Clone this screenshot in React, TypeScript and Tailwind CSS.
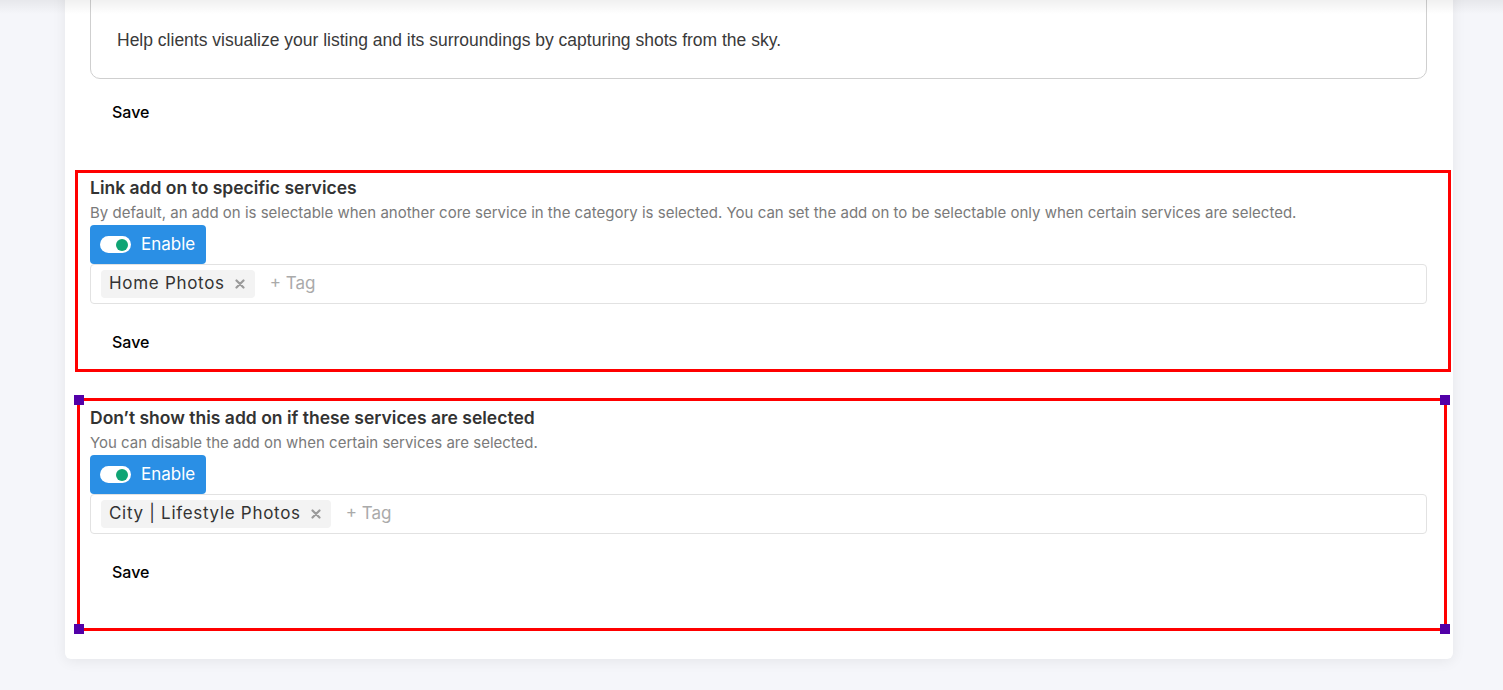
import React from 'react';

const font = { fontFamily: 'Inter, "Noto Sans", sans-serif' };

const Toggle = () => (
  <button className="flex items-center gap-[10px] h-[39px] w-[116px] px-[10px] rounded-[4px] bg-[#2a8fe5] text-white text-[17px]">
    <span className="flex items-center justify-end w-[31px] h-[17px] px-[3px] rounded-full bg-white">
      <span className="w-[12px] h-[12px] rounded-full bg-[#10a474]" />
    </span>
    <span>Enable</span>
  </button>
);

const TagInput = ({ tag }: { tag: string }) => (
  <div className="flex items-center h-[40px] border border-[#e2e2e2] rounded-[4px] px-[10px] gap-[15px]">
    <span className="flex items-center h-[28px] pl-[8px] pr-[10px] gap-[10px] rounded-[4px] bg-[#f3f3f3] text-[17px] text-[#333]">
      <span className="tracking-[0.7px]">{tag}</span>
      <svg viewBox="0 0 10 10" className="w-[10px] h-[10px]" stroke="#9a9a9a" strokeWidth="2.2" strokeLinecap="round">
        <path d="M1.5 1.5l7 7M8.5 1.5l-7 7" />
      </svg>
    </span>
    <span className="text-[17px] text-[#aaa]">+ Tag</span>
  </div>
);

const SaveButton = () => (
  <button className="h-[40px] px-[22px] flex items-center text-[16px] font-medium text-black">Save</button>
);

interface SectionProps {
  title: string;
  description: string;
  tag: string;
}

const Section: React.FC<SectionProps> = ({ title, description, tag }) => (
  <div className="mt-[41px]">
    <h3 className="text-[17.5px] leading-[30px] font-semibold text-[#333]">{title}</h3>
    <p className="text-[15px] leading-[20px] text-[#7a7a7a]">{description}</p>
    <div className="mt-[2px]">
      <Toggle />
    </div>
    <TagInput tag={tag} />
    <div className="mt-[18px]">
      <SaveButton />
    </div>
  </div>
);

const Handle = ({ className }: { className: string }) => (
  <span className={`absolute w-[10px] h-[10px] bg-[#5200a8] ${className}`} />
);

export default function App() {
  return (
    <div className="relative h-[690px] overflow-hidden bg-[#f5f6fa]" style={font}>
      <div className="ml-[65px] w-[1388px] -mt-[40px] bg-white rounded-b-[6px] shadow-[0_2px_14px_rgba(0,0,0,0.07)] pl-[25px] pr-[26px] pb-[67px]">
        <div className="h-[119px] border border-[#cfcfcf] rounded-[10px] flex items-end pb-[26px] pl-[26px]">
          <p className="text-[17.5px] leading-[24px] text-[#3a3a3a]" style={{ fontFamily: '"Liberation Sans", Arial, sans-serif' }}>
            Help clients visualize your listing and its surroundings by capturing shots from the sky.
          </p>
        </div>
        <div className="mt-[13px]">
          <SaveButton />
        </div>
        <Section
          title="Link add on to specific services"
          description="By default, an add on is selectable when another core service in the category is selected. You can set the add on to be selectable only when certain services are selected."
          tag="Home Photos"
        />
        <Section
          title="Don’t show this add on if these services are selected"
          description="You can disable the add on when certain services are selected."
          tag="City | Lifestyle Photos"
        />
      </div>

      {/* header shadow */}
      <div className="absolute top-0 left-0 right-0 h-[14px] bg-gradient-to-b from-[rgba(0,0,0,0.06)] to-transparent pointer-events-none" />

      {/* annotation overlays */}
      <div className="absolute left-[75px] top-[170px] w-[1376px] h-[202px] border-[3px] border-[#ff0000] pointer-events-none" />
      <div className="absolute left-[77px] top-[398px] w-[1370px] h-[233px] border-[3px] border-[#ff0000] pointer-events-none">
        <Handle className="-left-[6px] -top-[6px]" />
        <Handle className="-right-[6px] -top-[6px]" />
        <Handle className="-left-[6px] -bottom-[6px]" />
        <Handle className="-right-[6px] -bottom-[6px]" />
      </div>
    </div>
  );
}
